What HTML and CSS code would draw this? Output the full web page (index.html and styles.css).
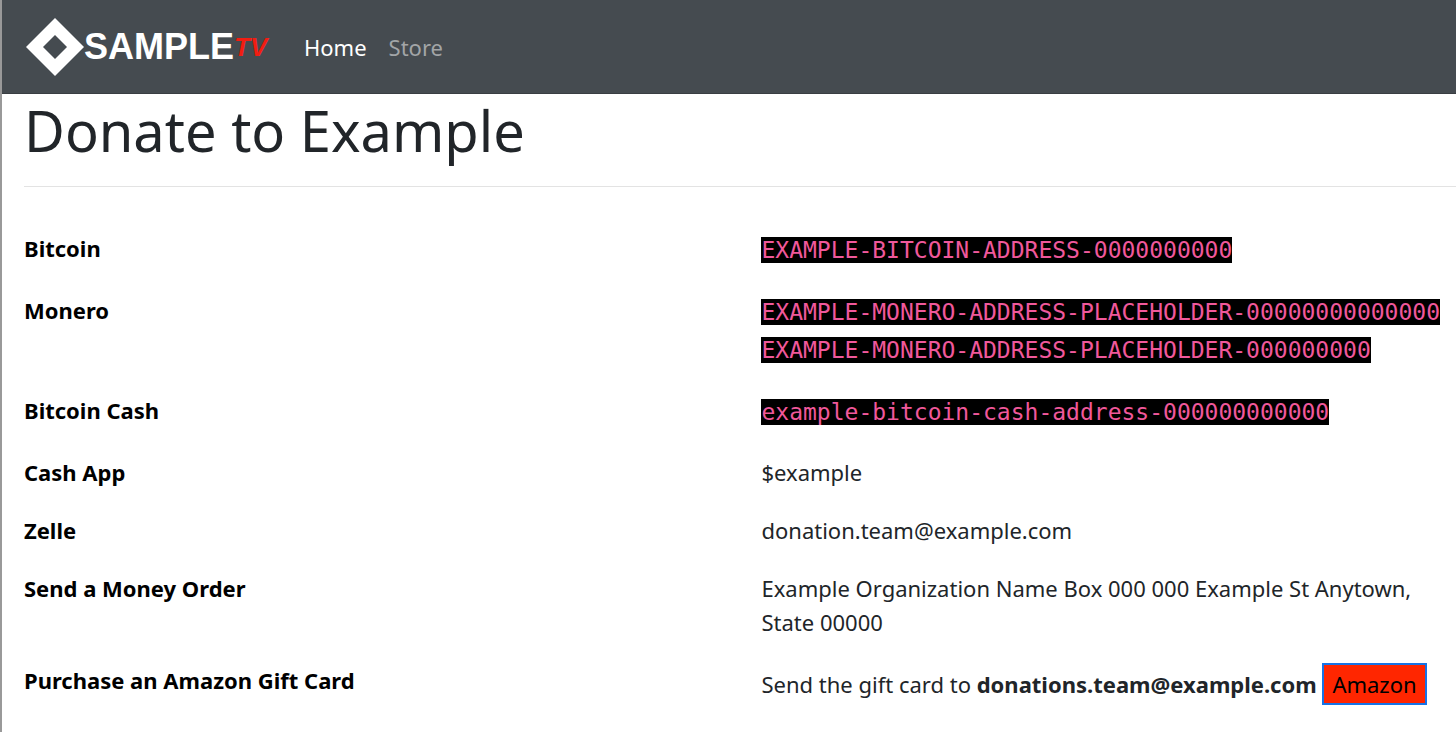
FILE: index.html
```html
<!DOCTYPE html>
<html lang="en">
<head>
    <meta charset="UTF-8">
    <meta name="viewport" content="width=device-width, initial-scale=1.0">
    <title>Donate to Example</title>
    <link rel="stylesheet" href="styles.css">
</head>
<body>
    <nav class="navbar">
        <a class="brand" href="#" aria-label="Example TV">
            <svg class="brand-mark" viewBox="0 0 58 58" aria-hidden="true">
                <path d="M29 0 58 29 29 58 0 29Z" fill="#fff"/>
                <path d="M29 17 41 29 29 41 17 29Z" fill="#454b50"/>
            </svg>
            <span class="brand-name">SAMPLE</span><span class="brand-tv">TV</span>
        </a>
        <a class="nav-link active" href="#">Home</a>
        <a class="nav-link" href="#">Store</a>
    </nav>
    <main>
        <h1>Donate to Example</h1>
        <hr>
        <table class="methods">
            <tr>
                <th scope="row">Bitcoin</th>
                <td><code>EXAMPLE-BITCOIN-ADDRESS-0000000000</code></td>
            </tr>
            <tr>
                <th scope="row">Monero</th>
                <td><code>EXAMPLE-MONERO-ADDRESS-PLACEHOLDER-00000000000000 EXAMPLE-MONERO-ADDRESS-PLACEHOLDER-000000000</code></td>
            </tr>
            <tr>
                <th scope="row">Bitcoin Cash</th>
                <td><code>example-bitcoin-cash-address-000000000000</code></td>
            </tr>
            <tr>
                <th scope="row">Cash App</th>
                <td>$example</td>
            </tr>
            <tr>
                <th scope="row">Zelle</th>
                <td>donation.team@example.com</td>
            </tr>
            <tr>
                <th scope="row">Send a Money Order</th>
                <td>Example Organization Name Box 000 000 Example St Anytown, State 00000</td>
            </tr>
            <tr>
                <th scope="row">Purchase an Amazon Gift Card</th>
                <td class="gift">Send the gift card to <strong>donations.team@example.com</strong> <button type="button">Amazon</button></td>
            </tr>
        </table>
    </main>
</body>
</html>
```
FILE: styles.css
```css
* {
    box-sizing: border-box;
}
body {
    min-height: 100vh;
    margin: 0;
    border-left: 2px solid #999;
    background: white;
    color: #212529;
    font-family: "Noto Sans", sans-serif;
    font-size: 22px;
    line-height: 34px;
}
.navbar {
    display: flex;
    align-items: center;
    height: 94px;
    padding: 0 24px;
    border-bottom: 1px solid #393e42;
    background: #454b50;
}
.brand {
    display: flex;
    align-items: center;
    width: 246px;
    margin-right: 32px;
    color: white;
    font-family: "Liberation Sans", sans-serif;
    font-weight: bold;
    text-decoration: none;
}
.brand-mark {
    width: 58px;
    height: 58px;
}
.brand-name {
    font-size: 36px;
}
.brand-tv {
    color: #f21d12;
    font-size: 26px;
    font-style: italic;
}
.nav-link {
    margin-right: 22px;
    color: #a2a5a7;
    text-decoration: none;
}
.nav-link.active {
    color: white;
}
main {
    padding-left: 22px;
}
h1 {
    margin: 0;
    font-size: 56px;
    font-weight: normal;
    line-height: 72px;
}
hr {
    margin: 20px 0 32px;
    border: 0;
    border-top: 1px solid #e3e3e3;
}
.methods {
    width: 100%;
    table-layout: fixed;
    border-collapse: collapse;
}
.methods th,
.methods td {
    padding: 12px 8px 12px 0;
    text-align: left;
    vertical-align: top;
}
.methods th {
    width: 51.5%;
    color: black;
    font-weight: bold;
}
code {
    background: black;
    color: #f0589b;
    font-family: "DejaVu Sans Mono", monospace;
    font-size: 23px;
    line-height: 38px;
}
.gift {
    white-space: nowrap;
}
.gift button {
    height: 42px;
    padding: 0 8px;
    border: 2px solid #1673e6;
    background: #ff2600;
    color: black;
    font: inherit;
}
```
